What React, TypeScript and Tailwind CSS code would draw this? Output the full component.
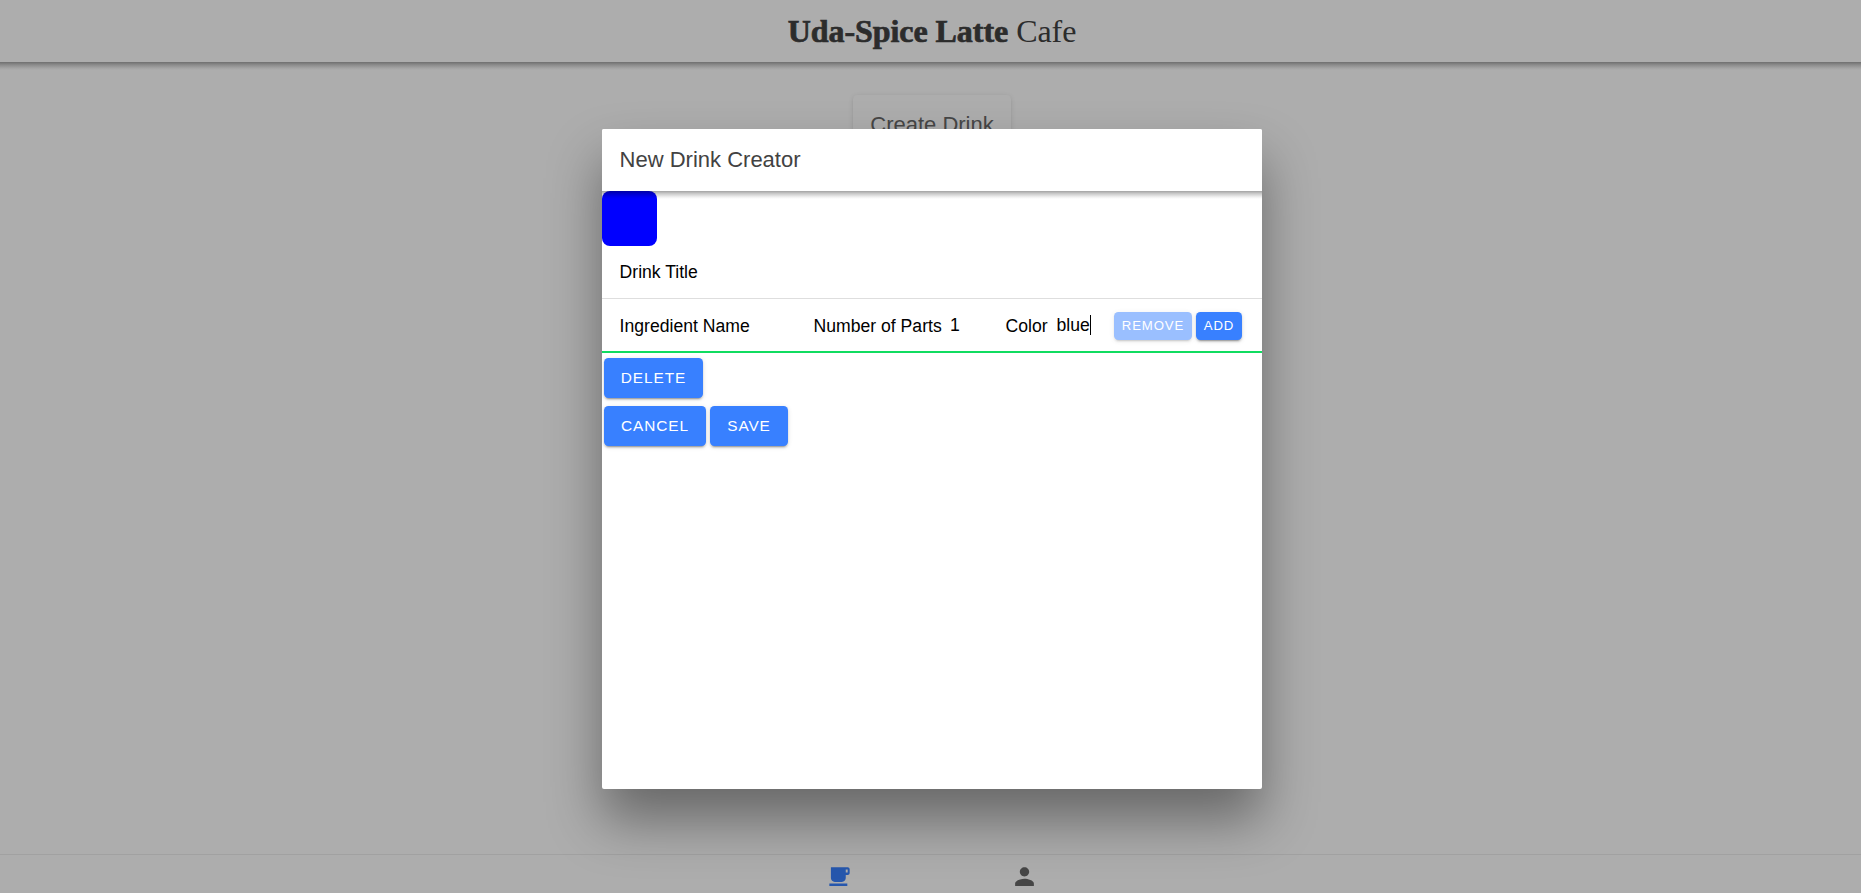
import type { ReactNode } from "react";
import { IoMdCafe, IoMdPerson } from "react-icons/io";

function HeaderShadow() {
  return (
    <div className="pointer-events-none absolute left-0 top-full z-10 h-[8px] w-full bg-[linear-gradient(to_bottom,rgba(0,0,0,0.36),rgba(0,0,0,0.2)_35%,rgba(0,0,0,0.06)_75%,transparent)]" />
  );
}

function Button({ children, className = "" }: { children: ReactNode; className?: string }) {
  return (
    <button
      className={`flex h-10 shrink-0 items-center justify-center rounded-[4.4px] bg-[#3880ff] text-[15.4px] leading-none tracking-[0.924px] text-white shadow-[0_3px_1px_-2px_rgba(0,0,0,0.2),0_2px_2px_0_rgba(0,0,0,0.14),0_1px_5px_0_rgba(0,0,0,0.12)] ${className}`}
    >
      {children}
    </button>
  );
}

function SmallButton({ children, className = "" }: { children: ReactNode; className?: string }) {
  return (
    <button
      className={`flex h-7 shrink-0 items-center justify-center rounded-[4.4px] bg-[#3880ff] text-[13.2px] leading-none tracking-[0.86px] text-white shadow-[0_3px_1px_-2px_rgba(0,0,0,0.2),0_2px_2px_0_rgba(0,0,0,0.14),0_1px_5px_0_rgba(0,0,0,0.12)] ${className}`}
    >
      {children}
    </button>
  );
}

function DrinkModal() {
  return (
    <div className="h-[660px] w-[660px] overflow-hidden rounded-[2px] bg-white shadow-[0_31px_53px_rgba(0,0,0,0.4)]">
      <header className="relative flex h-[62px] items-center bg-white px-[17.6px] pb-0.5 text-[22px] text-[#424242]">
        New Drink Creator
        <HeaderShadow />
      </header>
      <div className="h-[55px] w-[55px] rounded-[8px] bg-[#0000ff]" />
      <div className="flex h-[53px] items-center border-b border-[#dedede] px-[17.6px] text-[17.6px] text-black">
        Drink Title
      </div>
      <div className="flex h-[54px] items-center border-b-2 border-[#10dc60] pl-[17.6px] pr-5 pt-0.5 text-[17.6px] text-black">
        <span className="w-[194px] shrink-0">Ingredient Name</span>
        <span className="w-[136.4px] shrink-0">Number of Parts</span>
        <span className="w-[55.6px] shrink-0 pb-0.5">1</span>
        <span className="w-[51px] shrink-0">Color</span>
        <span className="flex w-[57.4px] shrink-0 items-center pb-0.5">
          blue
          <span className="h-5 w-px bg-black" />
        </span>
        <SmallButton className="w-[78px] opacity-50">REMOVE</SmallButton>
        <SmallButton className="ml-1 w-[46px]">ADD</SmallButton>
      </div>
      <div className="flex px-0.5 pt-[5px]">
        <Button className="w-[99px]">DELETE</Button>
      </div>
      <div className="flex gap-1 px-0.5 pt-2">
        <Button className="w-[102px]">CANCEL</Button>
        <Button className="w-[78px]">SAVE</Button>
      </div>
    </div>
  );
}

export default function App() {
  return (
    <div className="relative h-[893px] w-full overflow-hidden bg-white font-['Liberation_Sans',Arial,sans-serif]">
      <div className="flex h-[918px] w-[1864px] flex-col">
        <header className="relative flex h-[62px] shrink-0 items-center justify-center bg-white font-['Liberation_Serif',serif] text-[32px] text-[#424242]">
          <h1 className="whitespace-pre tracking-[-0.05px]">
            <span className="font-bold [-webkit-text-stroke:0.7px_#424242]">Uda-Spice Latte</span> Cafe
          </h1>
          <HeaderShadow />
        </header>
        <main className="flex flex-1 justify-center pt-[33px]">
          <div className="flex h-[62px] w-[158px] items-center justify-center rounded-[4.4px] pb-[3px] text-[22px] text-[#686868] shadow-[0_3px_1px_-2px_rgba(0,0,0,0.05),0_2px_2px_0_rgba(0,0,0,0.05),0_1px_5px_0_rgba(0,0,0,0.12)]">
            Create Drink
          </div>
        </main>
        <nav className="flex h-16 shrink-0 justify-center border-t border-[#ededed] bg-white pt-[9px]">
          <div className="flex w-[184.8px] justify-center text-[#3880ff]">
            <IoMdCafe size={25} />
          </div>
          <div className="flex w-[184.8px] justify-center text-[#686868]">
            <IoMdPerson size={25} />
          </div>
        </nav>
      </div>
      <div className="absolute left-0 top-0 flex h-[918px] w-[1864px] items-center justify-center bg-black/[0.32]">
        <DrinkModal />
      </div>
    </div>
  );
}
